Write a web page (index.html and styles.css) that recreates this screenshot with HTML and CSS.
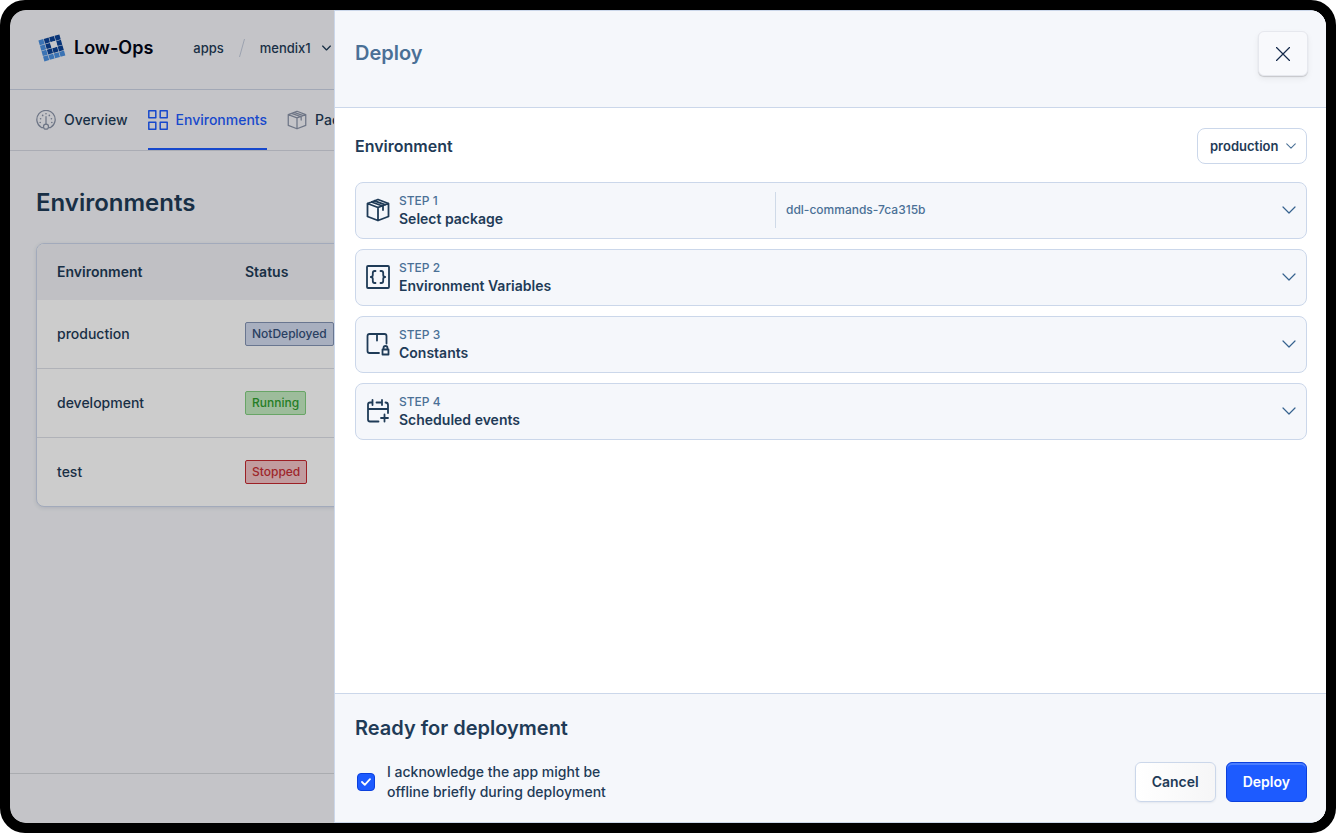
FILE: index.html
```html
<!DOCTYPE html>
<html lang="en">
<head>
<meta charset="utf-8">
<meta name="viewport" content="width=device-width, initial-scale=1">
<title>Low-Ops – Deploy</title>
<link rel="stylesheet" href="styles.css">
</head>
<body>
<svg class="sprite" aria-hidden="true">
  <symbol id="box" viewBox="0 0 24 24"><path d="M12 1.5 22.500 5.500v13L12 22.500 1.500 18.500v-13zM1.500 5.500l10.500 4 10.500-4M12 9.500v13M5.500 4l11 4M8.500 2.800l11 4M17 8v4"/></symbol>
  <symbol id="chevron" viewBox="0 0 14 8"><path d="m1 1 6 6 6-6"/></symbol>
</svg>
<div class="device">
  <div class="app">
    <header class="topbar">
      <a class="brand" href="#">
        <svg class="brand-logo" viewBox="0 0 28 28" aria-hidden="true">
          <g transform="rotate(-16 14 14)">
            <path class="logo-light" d="M3 3h5v5H3zM3 8.600h5v5H3zM3 14.200h5v5H3zM3 19.800h5v5H3zM8.600 19.800h5v5h-5zM14.200 19.800h5v5h-5zM19.800 19.800h5v5h-5z"/>
            <path class="logo-dark" d="M8.600 3h5v5h-5zM14.200 3h5v5h-5zM19.800 3h5v5h-5zM8.600 8.600h5v5h-5zM19.800 8.600h5v5h-5zM8.600 14.200h5v5h-5zM14.200 14.200h5v5h-5zM19.800 14.200h5v5h-5z"/>
            <path class="logo-core" d="M13.600 8h6.200v6.200h-6.200z"/>
          </g>
        </svg>
        <span>Low-Ops</span>
      </a>
      <nav class="crumbs" aria-label="Breadcrumb">
        <a href="#">apps</a>
        <svg class="slash" viewBox="0 0 6 20" aria-hidden="true"><path d="M5.500 1 .5 19"/></svg>
        <button class="crumb-button" type="button">mendix1 <svg class="icon chevron-xs" aria-hidden="true"><use href="#chevron"/></svg></button>
      </nav>
    </header>
    <nav class="tabs" aria-label="Sections">
      <a class="tab" href="#">
        <svg class="icon tab-icon" viewBox="0 0 24 24" aria-hidden="true"><path d="M8.500 21H6.500A11 11 0 1 1 17.500 21h-2"/><circle cx="12" cy="20" r="3"/><path d="M12 17V8"/><path class="dots" d="M5 15h.01M5.500 10.500h.01M8 6.500h.01M12 4.500h.01M16 6.500h.01M18.500 10.500h.01M19 15h.01"/></svg>
        Overview</a>
      <a class="tab tab-active" href="#" aria-current="page">
        <svg class="icon tab-icon" viewBox="0 0 20 20" aria-hidden="true"><path d="M.8.800h7v7h-7zM12.200.800h7v7h-7zM.8 12.200h7v7h-7zM12.200 12.200h7v7h-7z"/></svg>
        Environments</a>
      <a class="tab" href="#"><svg class="icon tab-icon" aria-hidden="true"><use href="#box"/></svg>
        Packages</a>
    </nav>
    <main class="page">
      <h1 class="page-title">Environments</h1>
      <div class="table-card">
        <table class="table">
          <thead><tr><th class="col-name">Environment</th><th>Status</th></tr></thead>
          <tbody>
            <tr><td>production</td><td><span class="badge badge-idle">NotDeployed</span></td></tr>
            <tr><td>development</td><td><span class="badge badge-ok">Running</span></td></tr>
            <tr><td>test</td><td><span class="badge badge-stop">Stopped</span></td></tr>
          </tbody>
        </table>
      </div>
    </main>
    <footer class="app-footer"></footer>
  </div>

  <div class="scrim">
  <section class="drawer" role="dialog" aria-labelledby="drawer-title">
    <header class="drawer-header">
      <h2 class="drawer-title" id="drawer-title">Deploy</h2>
      <button class="close" type="button" aria-label="Close"><svg class="icon close-icon" viewBox="0 0 14 14" aria-hidden="true"><path d="m.5.500 13 13M13.500.500l-13 13"/></svg></button>
    </header>
    <div class="drawer-body">
      <div class="env-row">
        <label class="env-label" for="env">Environment</label>
        <div class="select-wrap">
          <select class="select" id="env"><option>production</option></select>
          <svg class="icon select-chevron" aria-hidden="true"><use href="#chevron"/></svg>
        </div>
      </div>
      <div class="steps">
        <button class="step" type="button">
          <svg class="icon step-icon" aria-hidden="true"><use href="#box"/></svg>
          <span class="step-text"><span class="step-no">STEP 1</span><span class="step-name">Select package</span></span>
          <span class="step-value">ddl-commands-7ca315b</span>
          <svg class="icon step-chevron" aria-hidden="true"><use href="#chevron"/></svg>
        </button>
        <button class="step" type="button">
          <svg class="icon step-icon" viewBox="0 0 24 24" aria-hidden="true"><rect x="1" y="1" width="22" height="22" rx="1"/><path d="M9.500 6H8.700Q6.800 6 6.800 8v2Q6.800 12 4.800 12q2 0 2 2v2q0 2 1.900 2h.8M14.500 6h.8q1.900 0 1.900 2v2q0 2 2 2-2 0-2 2v2q0 2-1.900 2h-.8"/></svg>
          <span class="step-text"><span class="step-no">STEP 2</span><span class="step-name">Environment Variables</span></span>
          <svg class="icon step-chevron" aria-hidden="true"><use href="#chevron"/></svg>
        </button>
        <button class="step" type="button">
          <svg class="icon step-icon" viewBox="0 0 24 24" aria-hidden="true"><path d="M13 21H3.500q-2 0-2-2V4q0-2 2-2h15q2 0 2 2v7.500M11 2v6.500M16.500 17.500h6v5h-6zM17.500 17.500V16a2 2 0 0 1 4 0v1.500"/></svg>
          <span class="step-text"><span class="step-no">STEP 3</span><span class="step-name">Constants</span></span>
          <svg class="icon step-chevron" aria-hidden="true"><use href="#chevron"/></svg>
        </button>
        <button class="step" type="button">
          <svg class="icon step-icon" viewBox="0 0 24 24" aria-hidden="true"><path d="M12.500 22.500H4q-2 0-2-2v-15q0-2 2-2h2.500V1M6.500 3.500V6M10.500 3.500H16V1M16 3.500V6M19.500 3.500q2.500 0 2.500 2.500v8M2 10h20M18.500 15.500v7M15 19h7"/></svg>
          <span class="step-text"><span class="step-no">STEP 4</span><span class="step-name">Scheduled events</span></span>
          <svg class="icon step-chevron" aria-hidden="true"><use href="#chevron"/></svg>
        </button>
      </div>
    </div>
    <footer class="drawer-footer">
      <h3 class="ready">Ready for deployment</h3>
      <div class="confirm">
        <label class="ack">
          <span class="check-wrap">
            <input class="check" type="checkbox" checked>
            <svg class="check-mark" viewBox="0 0 10 8" aria-hidden="true"><path d="m1 4 2.800 2.800L9 1.200"/></svg>
          </span>
          <span>I acknowledge the app might be<br>offline briefly during deployment</span>
        </label>
        <div class="actions">
          <button class="button" type="button">Cancel</button>
          <button class="button button-primary" type="button">Deploy</button>
        </div>
      </div>
    </footer>
  </section>
  </div>
</div>
</body>
</html>
```
FILE: styles.css
```css
* { box-sizing: border-box; }
body {
  margin: 0;
  background: #fff;
  color: #1f3b57;
  font: 500 14px/20px Inter, "Liberation Sans", sans-serif;
}
h1, h2, h3 { margin: 0; font-weight: 600; }
a { color: inherit; text-decoration: none; }
button, select { font: inherit; color: inherit; }
.sprite { display: none; }
.icon { flex: none; fill: none; stroke: currentColor; stroke-width: 1.5; stroke-linejoin: round; stroke-linecap: round; }

.device {
  position: relative;
  height: 100vh;
  overflow: hidden;
  background: #000;
  border: 10px solid #000;
  border-radius: 25px;
}
.app {
  display: flex;
  flex-direction: column;
  height: 100%;
  background: #f5f6fa;
  border-radius: 16px;
  white-space: nowrap;
}

.topbar { display: flex; align-items: center; gap: 40px; padding: 10px 28px 14px; min-height: 80px; border-bottom: 1px solid #cbd2e4; }
.brand { display: flex; align-items: center; gap: 8px; color: #020617; font-weight: 600; font-size: 18px; }
.brand-logo { width: 28px; height: 28px; }
.logo-light { fill: #4a90e2; }
.logo-dark { fill: #0b4296; }
.logo-core { fill: #f5f6fa; }
.crumbs { display: flex; align-items: center; gap: 15px; font-size: 13px; }
.slash { width: 6px; height: 20px; fill: none; stroke: #c3cadb; }
.crumb-button { display: flex; align-items: center; gap: 11px; padding: 0; border: 0; background: none; }
.chevron-xs { width: 9px; height: 6px; stroke-width: 2; }

.tabs { display: flex; gap: 20px; padding: 0 26px; border-bottom: 1px solid #d5d8e2; }
.tab { display: flex; align-items: center; gap: 8px; height: 60px; padding-top: 2px; border-bottom: 2px solid transparent; }
.tab-icon { width: 20px; height: 20px; color: #8a93a8; }
.dots { stroke-width: 2; }
.tab-active { color: #1d5bff; border-color: #1d5bff; }
.tab-active .tab-icon { color: inherit; }

.page { flex: 1; padding: 36px 26px; }
.page-title { font-size: 24px; line-height: 32px; }
.table-card { margin-top: 24px; overflow: hidden; background: #fff; border: 1px solid #cbd5ea; border-radius: 8px; box-shadow: 0 1px 4px rgba(30, 50, 90, .12); }
.table { width: 100%; border-spacing: 0; }
.table th { height: 56px; padding: 0 20px; background: #f0f1f5; text-align: left; font-weight: 600; }
.table td { height: 69px; padding: 0 20px; border-bottom: 1px solid #dcdfe6; }
.table tr:last-child td { height: 68px; border-bottom: 0; }
.table th + th, .table td + td { padding-left: 0; }
.table .col-name { width: 208px; }
.badge { display: inline-block; padding: 0 6px; border: 1px solid; border-radius: 2px; font-size: 12px; line-height: 22px; }
.badge-idle { color: #35507a; background: #d3dbef; border-color: #8494b4; }
.badge-ok { color: #2f9e2f; background: #c5ecc2; border-color: #82cf80; }
.badge-stop { color: #c62f35; background: #f2c4c7; border-color: #c4282f; }
.app-footer { height: 50px; border-top: 1px solid #d5d8dd; }

/* The scrim dims the app and holds the drawer on its right side. */
.scrim { position: absolute; inset: 0; display: flex; padding-left: 324px; background: rgba(0, 0, 0, .2); border-radius: 16px; overflow: hidden; }
.drawer { flex: 1; min-width: 0; display: flex; flex-direction: column; background: #fff; border: 1px solid #cbd7ea; border-right: 0; border-radius: 0 16px 16px 0; }
.drawer-header { display: flex; justify-content: space-between; align-items: flex-start; padding: 20px 18px 31px 20px; background: #f5f7fb; border-bottom: 1px solid #cbd7ea; }
.drawer-title { font-size: 20px; line-height: 44px; color: #4a7096; }
.close { display: grid; place-items: center; width: 50px; height: 45px; color: #14294b; background: #f8f9fc; border: 1px solid #e6e8ee; border-radius: 6px; box-shadow: 0 1px 1px rgba(0, 0, 0, .16), 0 3px 6px rgba(0, 0, 0, .06); }
.close-icon { width: 14px; height: 14px; stroke-width: 1.2; }

.drawer-body { flex: 1; padding: 20px 19px 20px 20px; }
.env-row { display: flex; justify-content: space-between; align-items: center; }
.env-label { font-size: 16px; font-weight: 600; }
.select-wrap { position: relative; }
.select { appearance: none; display: block; height: 36px; width: 110px; padding: 0 12px; background: #fff; border: 1px solid #cbd7ea; border-radius: 8px; font-size: 13px; font-weight: 600; }
.select-chevron { position: absolute; right: 11px; top: 15px; width: 10px; height: 6px; color: #4a7096; pointer-events: none; }

.steps { display: grid; gap: 10px; margin-top: 18px; }
.step { display: flex; align-items: center; min-height: 57px; padding: 8px 10px 10px; background: #f5f7fb; border: 1px solid #cbd7ea; border-radius: 8px; text-align: left; }
.step-icon { width: 24px; height: 24px; color: #1f3b57; stroke-width: 1.8; }
.step-text { display: grid; flex: 1 1 0; max-width: 385px; padding-left: 9px; }
.step-no { font-size: 12px; line-height: 18px; color: #4a7096; }
.step-name { font-weight: 600; line-height: 18px; }
.step-value { padding: 8px 10px; border-left: 1px solid #cfdae8; font-size: 12px; color: #4a7096; }
.step-chevron { width: 14px; height: 8px; margin-left: auto; color: #36628f; stroke-width: 1.2; }

.drawer-footer { padding: 20px 19px 20px 20px; background: #f5f7fb; border-top: 1px solid #cbd7ea; }
.ready { font-size: 20px; line-height: 28px; }
.confirm { display: flex; align-items: center; justify-content: space-between; margin-top: 20px; }
.ack { display: flex; align-items: center; gap: 12px; padding-left: 2px; }
.check-wrap { position: relative; display: flex; }
.check { appearance: none; width: 18px; height: 18px; margin: 0; background: #1d5bff; border: 1px solid #0b40dd; border-radius: 4px; }
.check-mark { position: absolute; left: 4px; top: 5px; width: 10px; height: 8px; fill: none; stroke: #fff; stroke-width: 1.8; stroke-linecap: round; stroke-linejoin: round; }
.actions { display: flex; gap: 10px; }
.button { height: 40px; padding: 0 16px; background: linear-gradient(to right, #fff, #f6f6f7); border: 1px solid #cbd7ea; border-radius: 6px; box-shadow: 0 1px 2px rgba(30, 50, 90, .08); font-weight: 600; }
.button-primary { color: #fff; background: #1d5bff; border-color: #0b40dd; box-shadow: inset 0 2px 0 #4a7dff; }
```
